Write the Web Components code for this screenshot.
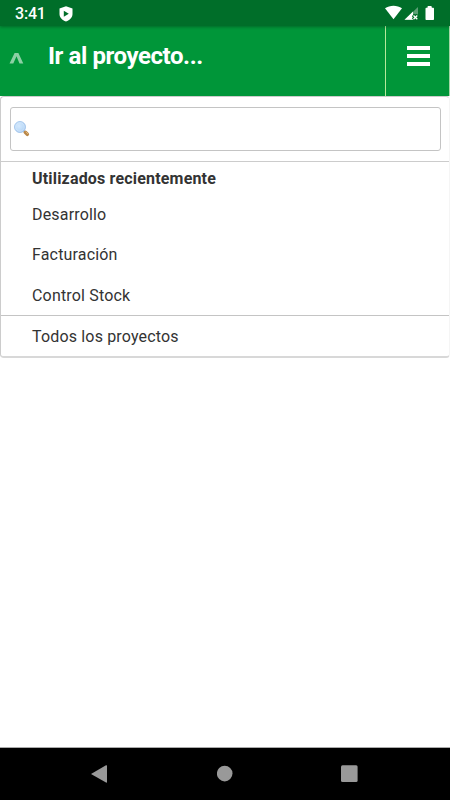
<!DOCTYPE html>
<html lang="es">
<head>
<meta charset="UTF-8">
<meta name="viewport" content="width=device-width, initial-scale=1">
<title>Proyectos</title>
<style>
    body {
        margin: 0;
        height: 800px;
        display: flex;
        flex-direction: column;
        overflow: hidden;
        background: #fff;
        color: #333;
        font-family: Roboto, sans-serif;
    }
    main { flex: 1; }
</style>
</head>
<body>
<status-bar time="3:41"></status-bar>
<app-header>Ir al proyecto...</app-header>
<main>
    <project-panel>
        <search-box slot="search"></search-box>
        <project-group heading="Utilizados recientemente">
            <project-item>Desarrollo</project-item>
            <project-item>Facturación</project-item>
            <project-item>Control Stock</project-item>
        </project-group>
        <project-item slot="all">Todos los proyectos</project-item>
    </project-panel>
</main>
<nav-bar></nav-bar>

<script>
// status bar
class StatusBar extends HTMLElement {
    constructor() {
        super();
        this.attachShadow({ mode: 'open' });
    }

    connectedCallback() {
        this.shadowRoot.innerHTML = `
            <style>
                :host {
                    display: flex;
                    align-items: center;
                    justify-content: space-between;
                    box-sizing: border-box;
                    height: 26px;
                    padding-left: 15px;
                    background: #006e29;
                    color: #fff;
                    font-size: 16px;
                    font-weight: 500;
                    letter-spacing: -0.2px;
                    z-index: 1;
                    box-shadow: 0 1px 3px rgba(0,0,0,0.3);
                }
                .left {
                    display: flex;
                    align-items: center;
                    gap: 13px;
                    line-height: 20px;
                    padding-top: 2px;
                }
                svg { display: block; }
                .left svg { margin-top: -1px; }
            </style>
            <div class="left">
                <span>${this.getAttribute('time')}</span>
                <svg width="14" height="16" viewBox="0 0 14 16">
                    <path fill="#fff" fill-rule="evenodd" d="M7 .3 13.500 2.600V8c0 3.500-2.700 6.200-6.500 7.400C3.200 14.200.5 11.500.5 8V2.600ZM4.800 4.800v6l5-3Z"/>
                </svg>
            </div>
            <svg width="66" height="26" viewBox="0 0 66 26">
                <path fill="#fff" d="M1 8.300C5.800 4.900 13.200 4.900 18 8.300L9.500 19.200Z"/>
                <path fill="#5c9f75" d="M34 7v7.500h-5V20H20.500Z"/>
                <path fill="#fff" d="M29 11.500v8.300H20.500Z"/>
                <path stroke="#006e29" stroke-width="3.400" d="M29 15l4.500 4.500M33.500 15l-4.500 4.500"/>
                <path stroke="#fff" stroke-width="1.300" d="M29.500 15.500l3.800 3.800M33.300 15.500l-3.800 3.800"/>
                <path fill="#fff" d="M44.500 6h2.200c.6 0 1.100.5 1.100 1.100v.6H49c.6 0 1 .4 1 1V19c0 .6-.4 1-1 1h-6.500c-.6 0-1-.4-1-1V8.700c0-.6.400-1 1-1h1V7c0-.6.400-1 1-1Z"/>
            </svg>
        `;
    }
}

// header
class AppHeader extends HTMLElement {
    constructor() {
        super();
        this.attachShadow({ mode: 'open' });
    }

    connectedCallback() {
        this.shadowRoot.innerHTML = `
            <style>
                :host {
                    display: flex;
                    box-sizing: border-box;
                    height: 70px;
                    padding-left: 9px;
                    background: #009639;
                    color: #fff;
                    border-right: 1px solid #a5d6a7;
                }
                .arrow {
                    width: 39px;
                    padding-top: 27px;
                }
                h1 {
                    flex: 1;
                    margin: 0;
                    padding-top: 16px;
                    font-size: 24px;
                    line-height: 28px;
                    font-weight: 700;
                    letter-spacing: -0.42px;
                    white-space: nowrap;
                }
                .menu {
                    display: flex;
                    flex-direction: column;
                    gap: 4px;
                    width: 64px;
                    box-sizing: border-box;
                    padding: 20px 0 0 21px;
                    border-left: 1px solid #b5e89a;
                }
                .menu i {
                    width: 23px;
                    height: 4px;
                    background: #fff;
                }
                svg { display: block; }
            </style>
            <div class="arrow">
                <svg width="15" height="11" viewBox="0 0 15 11">
                    <path fill="#8cd0a4" d="M5.600 0h3.800L14.300 10.500h-3.800L7.500 3.200 4.300 10.500H.5Z"/>
                </svg>
            </div>
            <h1><slot></slot></h1>
            <div class="menu"><i></i><i></i><i></i></div>
        `;
    }
}

// search field
class SearchBox extends HTMLElement {
    constructor() {
        super();
        this.attachShadow({ mode: 'open' });
    }

    connectedCallback() {
        this.shadowRoot.innerHTML = `
            <style>
                :host {
                    display: flex;
                    align-items: center;
                    box-sizing: border-box;
                    height: 44px;
                    padding-left: 3px;
                    border: 1px solid #c4c4c4;
                    border-radius: 3px;
                    background: #fff;
                }
            </style>
            <svg width="16" height="16" viewBox="0 0 16 16">
                <defs>
                    <radialGradient id="lens" cx=".4" cy=".4" r=".65">
                        <stop offset="0" stop-color="#d5e9fd"/>
                        <stop offset=".6" stop-color="#bedcf9"/>
                        <stop offset="1" stop-color="#9fc3ec"/>
                    </radialGradient>
                </defs>
                <path stroke="#86a8cf" stroke-width="2" d="M9.500 9.500l2 2"/>
                <path stroke="#b98749" stroke-width="3.600" stroke-linecap="round" d="M11.300 11.300l2 2"/>
                <path stroke="#e0b778" stroke-width="1" stroke-linecap="round" d="M12 11l1.800 1.800"/>
                <circle cx="6" cy="6" r="5.500" fill="url(#lens)" stroke="#a9c9ed" stroke-width="1"/>
                <circle cx="6" cy="6" r="4.200" fill="none" stroke="#d9eafb" stroke-width=".7"/>
            </svg>
        `;
    }
}

// dropdown panel
class ProjectPanel extends HTMLElement {
    constructor() {
        super();
        this.attachShadow({ mode: 'open' });
    }

    connectedCallback() {
        this.shadowRoot.innerHTML = `
            <style>
                :host {
                    display: block;
                    box-sizing: border-box;
                    height: 262px;
                    border: 1px solid #ccc;
                    border-right-color: #f5f5f5;
                    border-bottom: 2px solid #d8d8d8;
                    border-radius: 4px;
                }
                .search {
                    padding: 10px 8px 10px 9px;
                    border-bottom: 1px solid #ccc;
                }
                .recent {
                    height: 153px;
                    border-bottom: 1px solid #c4c4c4;
                }
            </style>
            <div class="search"><slot name="search"></slot></div>
            <div class="recent"><slot></slot></div>
            <slot name="all"></slot>
        `;
    }
}

class ProjectGroup extends HTMLElement {
    constructor() {
        super();
        this.attachShadow({ mode: 'open' });
    }

    connectedCallback() {
        this.shadowRoot.innerHTML = `
            <style>
                :host { display: block; }
                .heading {
                    height: 32px;
                    padding-left: 31px;
                    font-size: 16px;
                    line-height: 33px;
                    font-weight: 700;
                    letter-spacing: 0.18px;
                }
            </style>
            <div class="heading">${this.getAttribute('heading')}</div>
            <slot></slot>
        `;
    }
}

class ProjectItem extends HTMLElement {
    constructor() {
        super();
        this.attachShadow({ mode: 'open' });
    }

    connectedCallback() {
        this.shadowRoot.innerHTML = `
            <style>
                :host {
                    display: block;
                    height: 40.400px;
                    padding-left: 31px;
                    font-size: 16px;
                    line-height: 41.400px;
                    letter-spacing: 0.17px;
                }
            </style>
            <slot></slot>
        `;
    }
}

// system navigation
class NavBar extends HTMLElement {
    constructor() {
        super();
        this.attachShadow({ mode: 'open' });
    }

    connectedCallback() {
        this.shadowRoot.innerHTML = `
            <style>
                :host {
                    display: flex;
                    align-items: center;
                    justify-content: space-between;
                    box-sizing: border-box;
                    height: 53px;
                    padding: 0 92px 0 91px;
                    background: #000;
                    border-top: 1px solid #aaa;
                }
                svg { display: block; }
            </style>
            <svg width="17" height="18" viewBox="0 0 17 18"><path fill="#999" d="M0 8.900 15 .3q1-.5 1 .5v16.200q0 1-1 .5Z"/></svg>
            <svg width="16" height="18" viewBox="0 0 16 18"><circle cx="7.700" cy="8.600" r="7.800" fill="#999"/></svg>
            <svg width="17" height="18" viewBox="0 0 17 18"><rect y=".3" width="16.600" height="16.600" rx="1.500" fill="#999"/></svg>
        `;
    }
}

customElements.define('status-bar', StatusBar);
customElements.define('app-header', AppHeader);
customElements.define('search-box', SearchBox);
customElements.define('project-panel', ProjectPanel);
customElements.define('project-group', ProjectGroup);
customElements.define('project-item', ProjectItem);
customElements.define('nav-bar', NavBar);
</script>
</body>
</html>
